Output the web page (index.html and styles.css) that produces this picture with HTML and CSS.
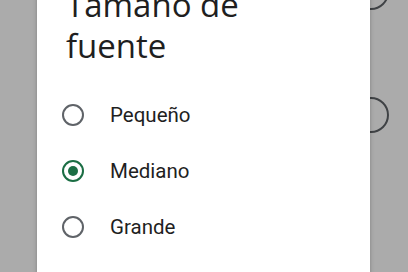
FILE: index.html
```html
<!DOCTYPE html>
<html lang="es">
<head>
<meta charset="utf-8">
<link rel="stylesheet" href="styles.css">
</head>
<body>
<div class="page">
  <div class="bg-list">
    <span class="bg-radio"></span>
    <span class="bg-radio"></span>
  </div>
</div>
<div class="scrim"></div>
<div class="dialog">
  <h1 class="title">Tamaño de fuente</h1>
  <ul class="options">
    <li class="option"><span class="radio"></span><span class="label">Pequeño</span></li>
    <li class="option"><span class="radio checked"></span><span class="label">Mediano</span></li>
    <li class="option"><span class="radio"></span><span class="label">Grande</span></li>
  </ul>
</div>
</body>
</html>
```

FILE: styles.css
```css
html, body {
  margin: 0;
  padding: 0;
  width: 408px;
  height: 272px;
  overflow: hidden;
}
body {
  background: #ffffff;
  font-family: Roboto, "Noto Sans", sans-serif;
  position: relative;
}
.page {
  height: 272px;
}
.bg-list {
  display: flex;
  flex-direction: column;
  align-items: flex-end;
  gap: 87px;
  padding-right: 19px;
  margin-top: -26px;
}
.bg-radio {
  width: 32px;
  height: 32px;
  border: 2px solid #5f6368;
  border-radius: 50%;
  display: block;
}
.scrim {
  position: absolute;
  inset: 0;
  background: rgba(0, 0, 0, 0.33);
}
.dialog {
  position: absolute;
  left: 37px;
  top: -16px;
  width: 333px;
  height: 320px;
  background: #ffffff;
  box-shadow: 0 0 4px rgba(0, 0, 0, 0.25);
  padding: 0 29px 0 29px;
  box-sizing: border-box;
}
.title {
  margin: 0;
  max-width: 250px;
  font-family: "Open Sans", "Noto Sans", sans-serif;
  font-weight: 400;
  font-size: 33px;
  line-height: 41px;
  color: #1f1f1f;
}
.options {
  list-style: none;
  margin: 21px 0 0 -5px;
  padding: 0;
}
.option {
  display: flex;
  align-items: center;
  height: 56px;
}
.radio {
  width: 18px;
  height: 18px;
  border: 2px solid #5f6368;
  border-radius: 50%;
  margin: 0 26px 0 1px;
  display: flex;
  align-items: center;
  justify-content: center;
  flex: none;
}
.radio.checked {
  border-color: #1b6e44;
}
.radio.checked::after {
  content: "";
  width: 10px;
  height: 10px;
  border-radius: 50%;
  background: #1b6e44;
}
.label {
  font-size: 20.5px;
  color: #1f1f1f;
}
```
